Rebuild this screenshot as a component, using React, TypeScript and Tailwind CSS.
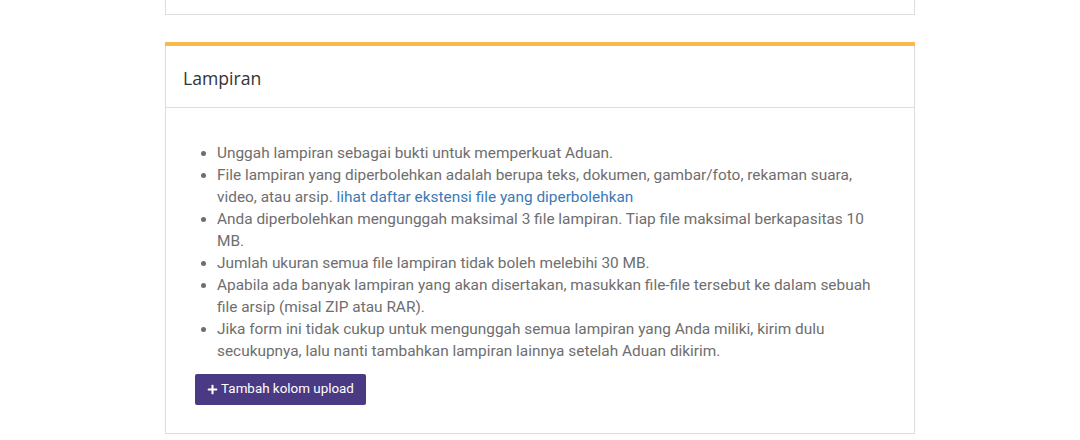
import { FaPlus } from "react-icons/fa"

const items: { text: string; link?: string }[] = [
  { text: "Unggah lampiran sebagai bukti untuk memperkuat Aduan." },
  {
    text: "File lampiran yang diperbolehkan adalah berupa teks, dokumen, gambar/foto, rekaman suara, video, atau arsip. ",
    link: "lihat daftar ekstensi file yang diperbolehkan",
  },
  { text: "Anda diperbolehkan mengunggah maksimal 3 file lampiran. Tiap file maksimal berkapasitas 10 MB." },
  { text: "Jumlah ukuran semua file lampiran tidak boleh melebihi 30 MB." },
  {
    text: "Apabila ada banyak lampiran yang akan disertakan, masukkan file-file tersebut ke dalam sebuah file arsip (misal ZIP atau RAR).",
  },
  {
    text: "Jika form ini tidak cukup untuk mengunggah semua lampiran yang Anda miliki, kirim dulu secukupnya, lalu nanti tambahkan lampiran lainnya setelah Aduan dikirim.",
  },
]

const App = () => {
  return (
    <div className="min-h-[440px] bg-white font-['Roboto',sans-serif]">
      <div className="mx-auto w-[750px]">
        <div className="h-[15px] border-x border-b border-[#dddddd]" />

        <div className="mt-[27px] border-t-4 border-[#f8b84c]">
          <div className="border-x border-b border-[#dddddd]">
            <div className="flex h-[62px] items-center border-b border-[#dddddd] px-[17px] pt-[3px] font-['Open_Sans',sans-serif] text-[17.6px] text-[#333333]">
              Lampiran
            </div>
            <div className="pl-[29px] pr-[28px] pt-[34px] pb-[28px]">
              <ul className="list-disc pl-[22px] text-[15.4px] leading-[22px] text-[#6e6e6e] marker:text-[#6e6e6e]">
                {items.map((item, key) => (
                  <li key={key}>
                    {item.text}
                    {item.link && (
                      <a href="#" className="text-[#3c7ab5]">
                        {item.link}
                      </a>
                    )}
                  </li>
                ))}
              </ul>
              <button className="mt-[12px] flex h-[31px] w-[171px] items-center justify-center gap-[3px] rounded-[2px] bg-[#4a3a84] text-[13.4px] text-white">
                <FaPlus className="text-[11px]" />
                <span>Tambah kolom upload</span>
              </button>
            </div>
          </div>
        </div>
      </div>
    </div>
  )
}

export default App
